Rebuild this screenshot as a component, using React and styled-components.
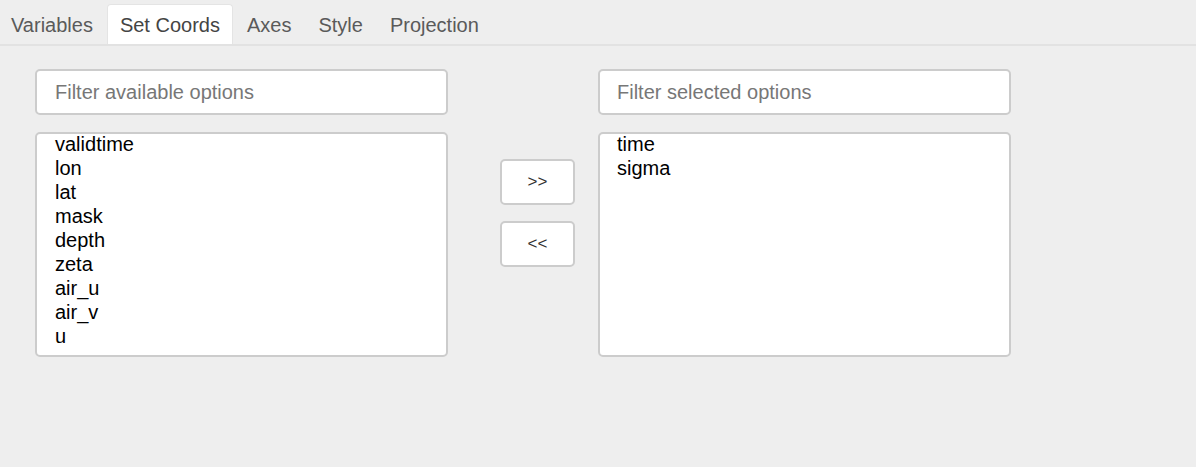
import React, { useState } from "react";
import styled, { createGlobalStyle } from "styled-components";

const GlobalStyle = createGlobalStyle`
	html, body {
		margin: 0;
		padding: 0;
		background: #eeeeee;
		font-family: "Liberation Sans", Arial, sans-serif;
	}
`;

const Page = styled.div`
	width: 1196px;
	height: 467px;
	background: #eeeeee;
	overflow: hidden;
`;

const TabBar = styled.div`
	display: flex;
	gap: 1px;
	margin-left: -2px;
	padding-top: 4px;
	border-bottom: 2px solid #e2e2e2;
`;

const Tab = styled.div`
	height: 40px;
	padding: 2px 12px 0;
	display: flex;
	align-items: center;
	font-size: 20px;
	color: ${(p) => (p.active ? "#444" : "#5a5a5a")};
	background: ${(p) => (p.active ? "#ffffff" : "transparent")};
	border: 1px solid ${(p) => (p.active ? "#e4e4e4" : "transparent")};
	border-bottom: none;
	border-radius: 4px 4px 0 0;
	box-sizing: border-box;
`;

const Body = styled.div`
	display: flex;
	align-items: flex-start;
	padding: 23px 0 0 35px;
`;

const Column = styled.div`
	width: 413px;
	display: flex;
	flex-direction: column;
	gap: 17px;
`;

const FilterInput = styled.input`
	height: 46px;
	box-sizing: border-box;
	border: 2px solid #cccccc;
	border-radius: 5px;
	background: #fff;
	padding: 0 18px 0 ${(p) => p.indent}px;
	font-family: inherit;
	font-size: 20px;
	color: #222;
	outline: none;

	&::placeholder {
		color: #777;
	}
`;

const List = styled.div`
	height: 225px;
	box-sizing: border-box;
	border: 2px solid #cccccc;
	border-radius: 5px;
	background: #fff;
	padding: 0 18px 0 ${(p) => p.indent}px;
	overflow: hidden;
`;

const ItemStack = styled.div`
	margin-top: -2px;
`;

const Item = styled.div`
	font-size: 20px;
	line-height: 24px;
	color: #000;
`;

const Buttons = styled.div`
	display: flex;
	flex-direction: column;
	gap: 16px;
	margin: 90px 23px 0 52px;
`;

const MoveButton = styled.button`
	width: 75px;
	height: 46px;
	box-sizing: border-box;
	border: 2px solid #cccccc;
	border-radius: 5px;
	background: #fff;
	font-family: inherit;
	font-size: 17px;
	color: #333;
	padding: 0;
`;

const tabs = ["Variables", "Set Coords", "Axes", "Style", "Projection"];
const available = ["validtime", "lon", "lat", "mask", "depth", "zeta", "air_u", "air_v", "u"];
const selected = ["time", "sigma"];

const OptionList = ({ items, indent }) => (
	<List indent={indent}>
		<ItemStack>
			{items.map((i) => (
				<Item key={i}>{i}</Item>
			))}
		</ItemStack>
	</List>
);

const App = () => {
	const [activeTab] = useState("Set Coords");

	return (
		<Page>
			<GlobalStyle />
			<TabBar>
				{tabs.map((t) => (
					<Tab key={t} active={t === activeTab}>
						{t}
					</Tab>
				))}
			</TabBar>
			<Body>
				<Column>
					<FilterInput placeholder="Filter available options" indent={18} />
					<OptionList items={available} indent={18} />
				</Column>
				<Buttons>
					<MoveButton>&gt;&gt;</MoveButton>
					<MoveButton>&lt;&lt;</MoveButton>
				</Buttons>
				<Column>
					<FilterInput placeholder="Filter selected options" indent={17} />
					<OptionList items={selected} indent={17} />
				</Column>
			</Body>
		</Page>
	);
};

export default App;
